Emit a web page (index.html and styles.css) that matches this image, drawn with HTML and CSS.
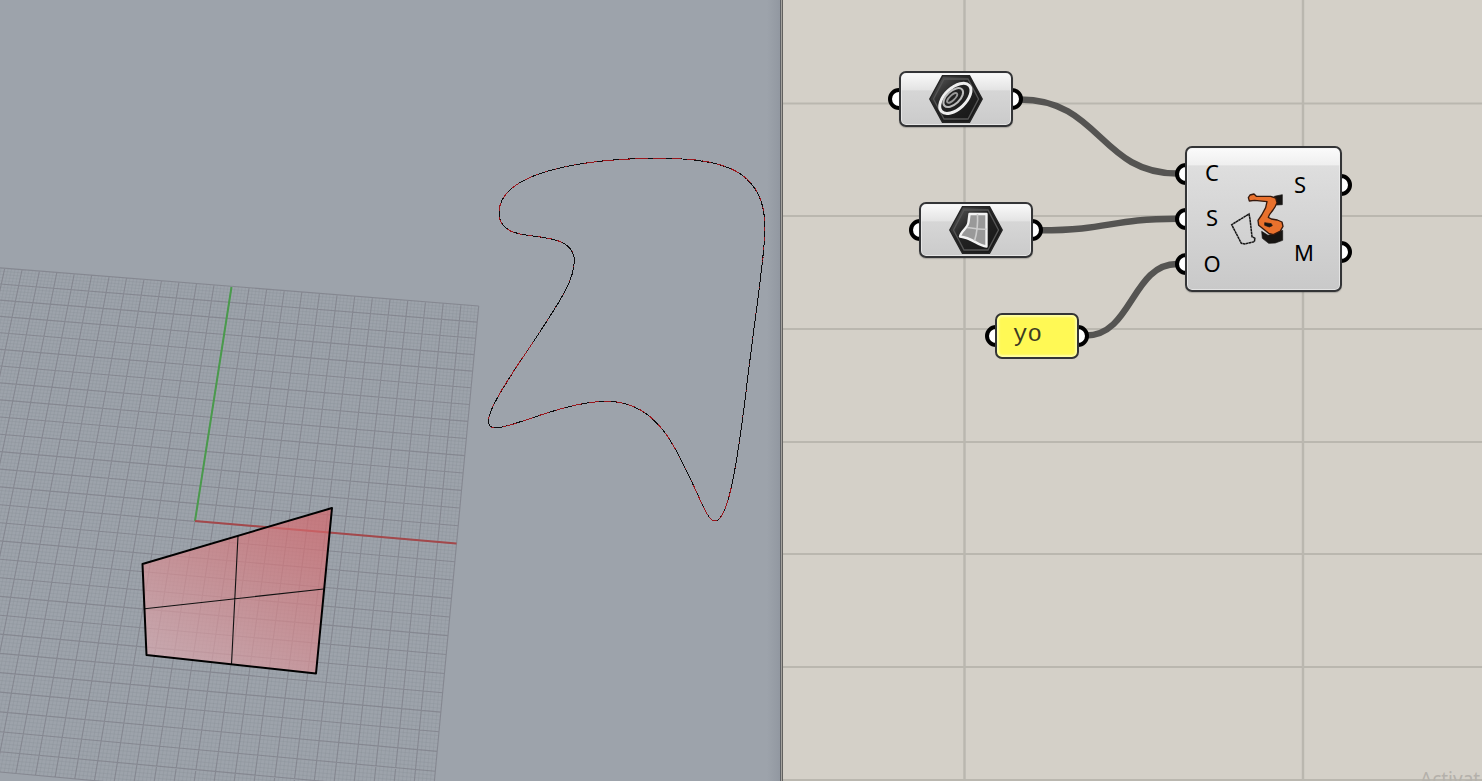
FILE: index.html
```html
<!DOCTYPE html>
<html lang="en">
<head>
<meta charset="utf-8">
<title>Viewport and node canvas</title>
<link rel="stylesheet" href="styles.css">
</head>
<body>
<main class="workspace">
  <section class="viewport">
    <svg class="scene" width="783" height="781" viewBox="0 0 783 781">
      <defs>
        <linearGradient id="surface" gradientUnits="userSpaceOnUse" x1="310" y1="520" x2="210" y2="690">
          <stop offset="0" stop-color="#d8686c"/>
          <stop offset=".45" stop-color="#d88589"/>
          <stop offset="1" stop-color="#dcaab0"/>
        </linearGradient>
      </defs>
      <path id="minor" class="grid-minor"/>
      <path id="major" class="grid-major"/>
      <path class="axis-y" d="M195 521L231.5 287"/>
      <path class="axis-x" d="M195 521L456.5 543.5"/>
      <path class="surface-fill" d="M142.500 564L332 508L316 673.500L146.500 655Z"/>
      <path class="surface-iso" d="M144.700 608.700L323.500 589M238 536L231.500 664"/>
      <path class="surface-edge" d="M142.500 564L332 508L316 673.500L146.500 655Z"/>
      <g class="curve">
        <path id="curve" d="M657 158.300C720 158 765 168 765 228C765 255 757 300 745 400C738 455 729 521 715 521C708 521 702 503 690 478C673 443 655 401.300 606 401.300C563 402 512 428 496 428C487 428 487 421 491 411C498 392 525 355 540 331.700C555 308 574.300 282 574.300 261C574.300 236 539 238 520 234C508 231.500 499 226 499 213C499 168 600 158.300 657 158.300Z"/>
      </g>
    </svg>
  </section>
  <section class="canvas">
    <svg class="wires" width="699" height="781" viewBox="783 0 699 781">
      <path class="rule" d="M783 103.500H1482M783 216H1482M783 329H1482M783 442H1482M783 554H1482M783 667H1482M783 780H1482"/>
      <path class="rule rule-v" d="M964.500 0V781M1303 0V781"/>
      <path class="wire" d="M1020 99.500C1100 99.500 1100 173.500 1177 173.500M1040 230.300C1110 230.300 1110 218.700 1177 218.700M1086 335.500C1132 335.500 1132 264 1177 264"/>
    </svg>

    <div class="node curve-node">
      <i class="port in"></i><i class="port out"></i>
      <div class="body">
        <svg width="54" height="48" viewBox="0 0 54 48">
          <defs>
            <linearGradient id="hex" x1="0" y1="0" x2="1" y2="1">
              <stop offset="0" stop-color="#626262"/><stop offset=".4" stop-color="#242424"/><stop offset="1" stop-color="#151515"/>
            </linearGradient>
          </defs>
          <path class="hex" d="M13.500 .8H40.500L53.200 24L40.500 47.200H13.500L.8 24Z"/>
          <path class="hex-line" d="M15 4H39L49.500 24L39 44H15L4.500 24Z"/>
          <g transform="rotate(-43 26 23)">
            <ellipse class="ring" cx="26" cy="23.500" rx="19" ry="10.500"/>
            <ellipse class="ring mid" cx="25" cy="21.500" rx="12" ry="6.500"/>
            <ellipse class="ring inner" cx="24" cy="21" rx="6.500" ry="2.500"/>
          </g>
        </svg>
      </div>
    </div>

    <div class="node surface-node">
      <i class="port in"></i><i class="port out"></i>
      <div class="body">
        <svg width="54" height="48" viewBox="0 0 54 48">
          <path class="hex" d="M13.500 .8H40.500L53.200 24L40.500 47.200H13.500L.8 24Z"/>
          <path class="hex-line" d="M15 4H39L49.500 24L39 44H15L4.500 24Z"/>
          <path class="patch" d="M20.500 8H37.500V40.500C28 39.500 24 32 11 30.500C12 25 19 22 19.500 16Z"/>
          <path class="patch-line" d="M28.500 8C29 18 28 27 25.500 35M18 21.500C24 22 31 24 37.500 23"/>
        </svg>
      </div>
    </div>

    <div class="node robot-node">
      <i class="port in p1"></i><i class="port in p2"></i><i class="port in p3"></i>
      <i class="port out p4"></i><i class="port out p5"></i>
      <div class="body">
        <div class="labels inputs"><span>C</span><span>S</span><span>O</span></div>
        <svg class="robot" width="65" height="65" viewBox="0 0 195 195">
          <path class="frame" d="M72 87L75 102L81 155L90 160L88 170L59 177L49 175L20 119Z"/>
          <path class="dark" d="M148 34L172 29V59L154 60Z"/>
          <path class="dark" d="M110 139L129 151L173 136V166L151 174L131 175L112 160Z"/>
          <path class="arm" d="M73 48L70 38L75 30L87 27L94 34L137 34L152 39L156 53L151 64L144 75L134 88L130 97L139 102L157 105L171 111L174 124L166 138L145 149L131 145L115 132L101 121L99 106L110 90L122 68L126 50L89 46Z"/>
          <path class="dark" d="M119 113L139 116L142 122L133 126L119 121Z"/>
        </svg>
        <div class="labels outputs"><span>S</span><span>M</span></div>
      </div>
    </div>

    <div class="node panel-node">
      <i class="port in"></i><i class="port out"></i>
      <div class="body"><span>yo</span></div>
    </div>

    <div class="watermark">Activat</div>
  </section>
</main>
<script src="grid.js"></script>
</body>
</html>
```

FILE: styles.css
```css
body { margin: 0; overflow: hidden; }
.workspace { display: flex; width: 1482px; height: 781px; overflow: hidden; }
.viewport {
  position: relative;
  width: 783px;
  box-sizing: border-box;
  flex: none;
  background: linear-gradient(90deg, #9da3ab 0, #9da3ab 767px, #9298a1 780px, #5f6165 780px, #5f6165 781px, #a5a39f 781px, #a5a39f 782px, #62615f 782px);
}
.scene, .wires { display: block; }
.scene path { fill: none; }
.scene .grid-minor { stroke: #858b94; stroke-width: .65; stroke-opacity: .42; }
.scene .grid-major { stroke: #7d7f88; stroke-width: 1.1; stroke-opacity: .75; }
.axis-y { stroke: #4a9a4c; stroke-width: 2; }
.axis-x { stroke: #a3484b; stroke-width: 2; }
.scene .surface-fill { fill: url(#surface); opacity: .67; }
.surface-iso { stroke: #111; stroke-width: 1.1; }
.surface-edge { stroke: #000; stroke-width: 2; stroke-linejoin: round; }
.curve path { stroke: #0c0c0e; stroke-width: 1; shape-rendering: crispEdges; }
.canvas { position: relative; flex: 1; overflow: hidden; background: #d4d0c8; font-family: "Noto Sans", "Open Sans", sans-serif; }
.rule { fill: none; stroke: #bab7af; stroke-width: 1.8; }
.rule-v { stroke-width: 2.4; }
.wire { fill: none; stroke: #555452; stroke-width: 6.4; }
.node { position: absolute; }
.body {
  position: relative;
  display: flex;
  align-items: center;
  justify-content: center;
  box-sizing: border-box;
  width: 100%;
  height: 100%;
  border: 2px solid #333436;
  border-radius: 7px;
  background: linear-gradient(#fafafa 0, #e3e3e3 33%, #d6d6d6 34%, #cbcbcb 100%);
  box-shadow: inset 0 0 0 1px #f1f1f1aa, 0 1px 1px #0003;
}
.port {
  position: absolute;
  top: calc(50% - 11px);
  width: 22px;
  height: 22px;
  box-sizing: border-box;
  border: 4px solid #000;
  border-radius: 50%;
  background: #fff;
}
.in { left: -10.500px; }
.out { right: -10px; }
.curve-node { left: 115.500px; top: 71px; width: 114.500px; height: 56px; }
.surface-node { left: 136px; top: 202px; width: 114px; height: 56px; }
.robot-node { left: 402px; top: 146px; width: 157px; height: 146px; }
.panel-node { left: 212px; top: 312.500px; width: 83.500px; height: 46.500px; }
.p1 { top: 16.500px; }
.p2 { top: 61.700px; }
.p3 { top: 106.700px; }
.p4 { top: 27.700px; }
.p5 { top: 95.300px; }
.robot-node .body {
  justify-content: flex-start;
  background: linear-gradient(#fbfbfb 0, #efefef 12%, #dedede 12.500%, #c9c9c9 100%);
}
.labels { display: flex; flex-direction: column; height: 136px; margin-bottom: 3px; font-size: 22px; color: #000; }
.labels span { flex: 1; display: flex; align-items: center; }
.inputs { width: 50px; }
.inputs span { justify-content: center; }
.outputs { width: 46px; margin-left: auto; }
.robot { flex: none; margin: 0 0 3px -12px; }
.panel-node .body {
  justify-content: flex-start;
  padding-left: 16px;
  background: #fff955;
  box-shadow: inset 0 0 2px 2px #ffffa6;
  font: 24px "Liberation Mono", monospace;
  color: #3c3b22;
}
.panel-node span { margin-top: -3px; }
.hex { fill: url(#hex); stroke: #252525; stroke-width: 1.5; }
.hex-line { fill: none; stroke: #555; stroke-width: 1.3; }
.ring { fill: none; stroke: #eee; stroke-width: 3; }
.mid { stroke: #bbb; stroke-width: 2; }
.inner { stroke: #999; stroke-width: 1.8; }
.patch { fill: #999; stroke: #f3f3f3; stroke-width: 2.4; stroke-linejoin: round; }
.patch-line { fill: none; stroke: #ccc; stroke-width: 1.6; }
.frame { fill: none; stroke: #151515; stroke-width: 4.500; stroke-dasharray: 8 1; }
.dark { fill: #171513; stroke: #171513; stroke-width: 2; }
.arm { fill: #e9712d; stroke: #36190d; stroke-width: 4; stroke-linejoin: round; }
.watermark { position: absolute; left: 637px; top: 766px; font-size: 19px; line-height: 26px; white-space: nowrap; color: #b4b1ab; }
```

FILE: grid.js
```js
// Ground plane: 28 x 28 cells, 5 subdivisions each, projected in perspective.
const anchors = [
  [-13, 14, 4.7, 268.3],
  [14, 14, 478.7, 306],
  [14, -12, 435.3, 771.3],
  [-7, -14, 15.9, 773.4]
];

function solve(rows) {
  const n = rows.length;
  for (let i = 0; i < n; i++) {
    let p = i;
    for (let r = i; r < n; r++) if (Math.abs(rows[r][i]) > Math.abs(rows[p][i])) p = r;
    [rows[i], rows[p]] = [rows[p], rows[i]];
    for (let r = 0; r < n; r++) {
      if (r === i) continue;
      const f = rows[r][i] / rows[i][i];
      for (let c = i; c <= n; c++) rows[r][c] -= f * rows[i][c];
    }
  }
  return rows.map((row, i) => row[n] / row[i]);
}

const system = [];
for (const [x, y, u, v] of anchors) {
  system.push([x, y, 1, 0, 0, 0, -u * x, -u * y, u]);
  system.push([0, 0, 0, x, y, 1, -v * x, -v * y, v]);
}
const h = solve(system);

function project(x, y) {
  const w = h[6] * x + h[7] * y + 1;
  return ((h[0] * x + h[1] * y + h[2]) / w).toFixed(2) + " " + ((h[3] * x + h[4] * y + h[5]) / w).toFixed(2);
}

let minor = "";
let major = "";
for (let i = -70; i <= 70; i++) {
  const k = i / 5;
  const d = "M" + project(k, -14) + "L" + project(k, 14) + "M" + project(-14, k) + "L" + project(14, k);
  if (i % 5 === 0) major += d; else minor += d;
}
document.getElementById("minor").setAttribute("d", minor);
document.getElementById("major").setAttribute("d", major);

// Red runs along the closed curve: [start, end, dash, gap], start and end as fractions of its length.
const curve = document.getElementById("curve");
const total = curve.getTotalLength();
const group = curve.parentNode;
const runs = [
  [0, .08, 9, 6], [.08, .15, 4, 6], [.15, .34, 1, 25], [.34, .40, 9, 3], [.40, .44, 1, 12],
  [.44, .52, 7, 5], [.52, .60, 10, 7], [.60, .64, 3, 9], [.64, .69, 9, 2], [.69, .79, 1, 14],
  [.79, .83, 4, 6], [.83, .89, 8, 6], [.89, .94, 2, 8], [.94, 1, 12, 5]
];
for (const [a, b, dash, gap] of runs) {
  let d = "";
  for (let s = a * total; s < b * total; s += dash + gap) {
    const p = curve.getPointAtLength(s);
    d += "M" + p.x + " " + p.y;
    for (let t = 1; t <= dash; t++) {
      const q = curve.getPointAtLength(s + t);
      d += "L" + q.x + " " + q.y;
    }
  }
  const path = document.createElementNS("http://www.w3.org/2000/svg", "path");
  path.setAttribute("d", d);
  path.style.stroke = "#98161c";
  group.appendChild(path);
}
```
